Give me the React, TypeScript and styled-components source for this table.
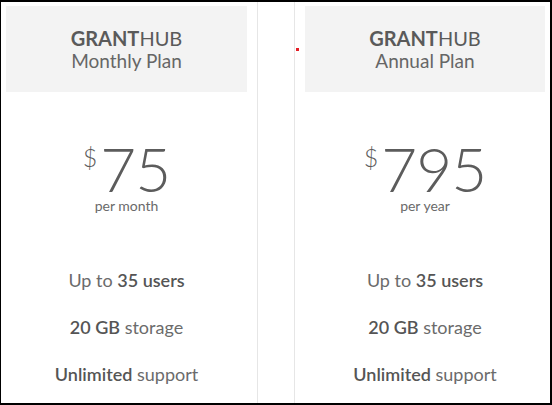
import React from "react";
import styled, { createGlobalStyle } from "styled-components";

const Global = createGlobalStyle`
  html, body { margin: 0; padding: 0; background: #fff; }
  body { font-family: Lato, "Open Sans", sans-serif; }
`;

const Frame = styled.div`
  position: relative;
  box-sizing: border-box;
  width: 552px;
  height: 405px;
  border-style: solid;
  border-color: #000;
  border-width: 2px 2px 2px 1px;
  display: flex;
  background: #fff;
  overflow: hidden;
`;

const Card = styled.div<{ $side: "left" | "right" }>`
  box-sizing: border-box;
  width: ${(p) => (p.$side === "left" ? 257 : 256)}px;
  height: 100%;
  padding: ${(p) => (p.$side === "left" ? "4px 10px 0 5px" : "4px 5px 0 10px")};
  ${(p) =>
    p.$side === "left"
      ? "border-right: 1px solid #e6e6e6;"
      : "border-left: 1px solid #e6e6e6; margin-left: 36px;"}
  display: flex;
  flex-direction: column;
  align-items: stretch;
`;

const Header = styled.div`
  height: 86px;
  background: #f3f3f3;
  display: flex;
  flex-direction: column;
  align-items: center;
  justify-content: center;
  color: #5a5a5a;
`;

const Brand = styled.div`
  font-size: 20px;
  line-height: 24px;
  font-weight: 400;
  b { font-weight: 700; }
`;

const PlanName = styled.div`
  font-size: 19px;
  line-height: 22px;
  font-weight: 400;
  color: #666;
`;

const PriceRow = styled.div`
  margin-top: 50px;
  display: flex;
  justify-content: center;
  align-items: flex-start;
  color: #5c5c5c;
`;

const Currency = styled.span`
  font-size: 25px;
  line-height: 24px;
  font-weight: 300;
  margin-top: 3px;
  margin-right: 3px;
`;

const Amount = styled.span`
  font-size: 62px;
  line-height: 52px;
  font-weight: 300;
  letter-spacing: -1px;
`;

const Period = styled.div`
  text-align: center;
  font-size: 14px;
  line-height: 18px;
  color: #6a6a6a;
  margin-top: 3px;
`;

const Features = styled.div`
  margin-top: 54px;
  display: flex;
  flex-direction: column;
  align-items: center;
  gap: 25px;
`;

const Feature = styled.div`
  font-size: 18px;
  line-height: 22px;
  color: #6b6b6b;
  b { font-weight: 600; color: #555; }
`;

const Dot = styled.span`
  position: absolute;
  left: 295px;
  top: 46px;
  width: 3px;
  height: 3px;
  background: #e41e26;
`;

type Plan = { name: string; amount: string; period: string };

const plans: Plan[] = [
  { name: "Monthly Plan", amount: "75", period: "per month" },
  { name: "Annual Plan", amount: "795", period: "per year" },
];

function PlanCard({ plan, side }: { plan: Plan; side: "left" | "right" }) {
  return (
    <Card $side={side}>
      <Header>
        <Brand>
          <b>GRANT</b>HUB
        </Brand>
        <PlanName>{plan.name}</PlanName>
      </Header>
      <PriceRow>
        <Currency>$</Currency>
        <Amount>{plan.amount}</Amount>
      </PriceRow>
      <Period>{plan.period}</Period>
      <Features>
        <Feature>
          Up to <b>35 users</b>
        </Feature>
        <Feature>
          <b>20 GB</b> storage
        </Feature>
        <Feature>
          <b>Unlimited</b> support
        </Feature>
      </Features>
    </Card>
  );
}

export default function App() {
  return (
    <>
      <Global />
      <Frame>
        <PlanCard plan={plans[0]} side="left" />
        <PlanCard plan={plans[1]} side="right" />
        <Dot />
      </Frame>
    </>
  );
}
